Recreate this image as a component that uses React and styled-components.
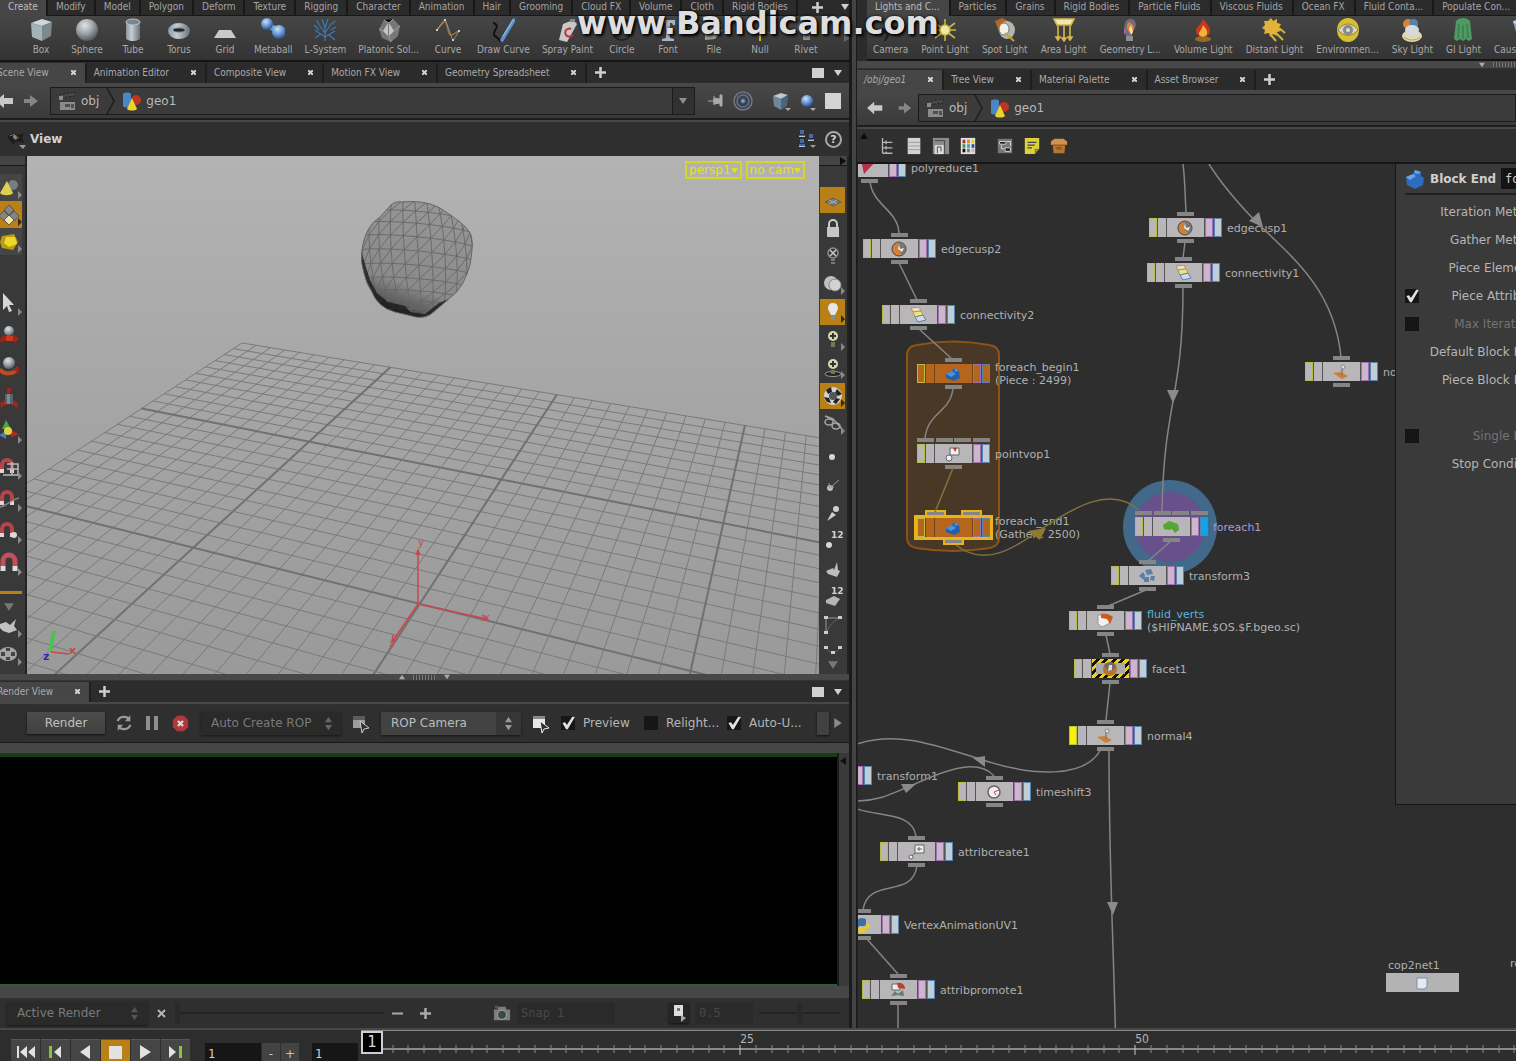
import React from 'react';
import styled, { createGlobalStyle, css } from 'styled-components';

const GlobalStyle = createGlobalStyle`
  * {
    box-sizing: border-box;
  }
  body {
    margin: 0;
    background: #2b2b2b;
    color: #bdbdbd;
    font-family: 'DejaVu Sans', sans-serif;
    font-size: 12px;
    overflow: hidden;
  }
  button,
  input,
  select {
    font: inherit;
    color: inherit;
    margin: 0;
    padding: 0;
    border: 0;
    border-radius: 0;
    background: none;
  }
  svg {
    display: block;
    flex: none;
  }
`;

/* ---------- shelf drawings, all on a 24 x 24 box ---------- */

const shelfIcons = {
  box: (
    <g>
      <path d="M2 5l11-4 10 3-10 4z" fill="#cdd6d9" />
      <path d="M2 5l11 3v15L3 19z" fill="#a5b3b8" />
      <path d="M13 8l10-4-1 14-9 5z" fill="#7b898f" />
    </g>
  ),
  sphere: <circle cx="12" cy="12" r="11" fill="url(#ball)" />,
  tube: (
    <g>
      <path d="M5 4v16c0 4 14 4 14 0V4z" fill="url(#steel)" />
      <ellipse cx="12" cy="4" rx="7" ry="3" fill="#7b8790" stroke="#bcc5cb" />
    </g>
  ),
  torus: (
    <g>
      <ellipse cx="12" cy="13" rx="11" ry="8" fill="url(#steel)" />
      <ellipse cx="12" cy="12" rx="6" ry="2" fill="#22262c" stroke="#6d7a88" />
    </g>
  ),
  grid: <path d="M6 12h12l5 8H1z" fill="#c9c9c9" />,
  metaball: (
    <g>
      <path d="M7 7l12 7" stroke="#6f9ed8" strokeWidth="6" />
      <circle cx="6" cy="6" r="6" fill="url(#blue)" />
      <circle cx="18" cy="14" r="7" fill="url(#blue)" />
    </g>
  ),
  lsystem: (
    <g stroke="#3c78b8" strokeWidth="1.2" fill="none">
      <path d="M12 23V10M12 15L6 7M12 15l6-9M12 10L9 1M12 10l3-9M12 19L2 12M12 19l10-6M6 12L1 7M6 7L4 2M18 6l5-3M18 12l5-3M8 16l-6 4M16 17l6 5" />
    </g>
  ),
  platonic: (
    <g>
      <path d="M7 2l9-1 7 7-2 10-7 6-9-4-3-9z" fill="#777" />
      <path d="M12 5l5 8-5 5zM11 5l-5 8 5 5z" fill="#c9c4c0" />
      <path d="M7 2l5 3 4-4M2 11l4 2M23 8l-6 5M12 18l2 6" stroke="#a09c98" />
    </g>
  ),
  curve: (
    <g fill="none">
      <path d="M1 12C10 0 10 3 12 12s4 4 11 1" stroke="#9c6b35" strokeWidth="1.5" />
      <path d="M1 12L9 1l8 22 6-10" stroke="#aaa" strokeWidth=".7" />
      <path d="M0 11h2v2H0zM8 1h2v2H8zM16 21h2v2h-2zM22 12h2v2h-2z" fill="#ccc" />
    </g>
  ),
  drawcurve: (
    <g fill="none" strokeLinecap="round">
      <path d="M3 5c8 4-4 9 1 13 3 3 4 2 5 5" stroke="#111" strokeWidth="2" />
      <path d="M23 2L11 22" stroke="#5b93d0" strokeWidth="3.5" />
      <path d="M22 2L12 18" stroke="#9cc4ee" strokeWidth="1" />
    </g>
  ),
  spray: (
    <g>
      <path d="M8 6l10-4 4 4-10 18-8-2z" fill="#c9c9c9" />
      <path d="M16 11a4 4 0 1 0 2 5" fill="none" stroke="#b33" strokeWidth="2" />
      <path d="M15 1h5v3h-5z" fill="#888" />
    </g>
  ),
  circle: <circle cx="12" cy="12" r="10" fill="none" stroke="#1f1f1f" strokeWidth="1.5" />,
  font: <path d="M5 2h14v5h-2l-1-2h-2v15l4 1v2H6v-2l4-1V5H8L7 7H5z" fill="#a9b4c2" />,
  file: (
    <g>
      <path d="M3 8h8l10 4-8 9-10 1z" fill="#9a9a9a" />
      <path d="M12 4l8 2-2 9-6-3z" fill="#d07a2b" />
    </g>
  ),
  nullobj: (
    <g strokeWidth="2">
      <path d="M12 2v21" stroke="#c9b71c" />
      <path d="M3 14h8" stroke="#3a70b0" />
      <path d="M13 12l9 3" stroke="#b03a2a" />
    </g>
  ),
  rivet: (
    <g>
      <ellipse cx="12" cy="9" rx="9" ry="7" fill="#666" />
      <path d="M9 15h7v7H9z" fill="#8d8d8d" />
    </g>
  ),
  camera: (
    <g fill="#1c1c1c">
      <path d="M6 8h12v8H6zM3 10h3v5H3zM8 16l-3 7h2l4-7z" />
      <circle cx="9" cy="5" r="3" />
    </g>
  ),
  point: (
    <g stroke="#c9b640" strokeWidth="1.6">
      <path d="M12 1v22M2 5l20 15M22 5L2 20M1 12h22" />
      <circle cx="12" cy="12" r="5" fill="#eee9a8" />
    </g>
  ),
  spot: (
    <g>
      <path d="M2 3l7-3 6 3-3 8-6 3z" fill="#b5651f" />
      <ellipse cx="14" cy="12" rx="8" ry="9" fill="#b5b5ae" />
      <ellipse cx="11" cy="11" rx="5" ry="6" fill="#f1f1ea" stroke="#777" />
      <path d="M12 15l9 8" stroke="#c4a52a" strokeWidth="2" />
    </g>
  ),
  area: (
    <g stroke="#d8b948" strokeWidth="1.6" fill="#d8b948">
      <path d="M2 1h20l-3 6H5z" fill="#efe6b6" />
      <path d="M6 8v13M12 8v14M18 8v13" />
      <path d="M4 19h4l-2 3zM10 20h4l-2 3zM16 19h4l-2 3z" />
    </g>
  ),
  geolight: (
    <g>
      <path d="M8 3c7-6 12 2 9 7s-3 7-4 13H9c0-6-5-12-1-20z" fill="#716a80" />
      <path d="M11 4c6 2 6 8 2 12-4-3-6-8-2-12z" fill="#d8833c" />
      <path d="M11 11l2-4 2 7-2 3z" fill="#efe58c" />
      <path d="M6 9l2 5-2 3z" fill="#b06ab0" />
      <path d="M8 18h7v5H8z" fill="#8e8e94" />
    </g>
  ),
  volume: (
    <g>
      <ellipse cx="12" cy="21" rx="8" ry="3" fill="#9a6a24" />
      <path d="M12 0c2 5 8 8 7 14s-13 6-14 0C4 9 11 7 12 0z" fill="#c8381c" />
      <path d="M12 7c2 3 5 5 4 9s-8 3-8 0 3-4 4-9z" fill="#f3b33a" />
    </g>
  ),
  distant: (
    <g>
      <path d="M9 0l2 3 4-2v4l4 1-2 4 2 3-4 1v4l-4-2-3 3-1-4-5 1 1-4-3-2 3-3-1-4 4 0z" fill="#e2b23a" />
      <path d="M13 14l8 8M17 10l6 5M9 17l5 6" stroke="#d8b13c" strokeWidth="2" />
    </g>
  ),
  environment: (
    <g>
      <ellipse cx="12" cy="12" rx="11" ry="12" fill="#d9c031" />
      <path d="M2 12c5-8 15-8 20 0-5 7-15 7-20 0z" fill="#d2d2cc" stroke="#8d8023" />
      <circle cx="12" cy="12" r="5" fill="#888" />
      <circle cx="12" cy="12" r="2" fill="#ddd" />
    </g>
  ),
  sky: (
    <g>
      <circle cx="8" cy="6" r="5" fill="#d88434" />
      <path d="M9 3c5-5 10-1 9 5l-6 6z" fill="#5a7fa6" />
      <ellipse cx="12" cy="18" rx="10" ry="6" fill="#ddd9b8" />
      <ellipse cx="12" cy="12" rx="7" ry="5" fill="#d4dae0" />
      <path d="M4 19c5 4 12 4 16 0" stroke="#c89b3a" fill="none" />
    </g>
  ),
  gi: (
    <g>
      <path d="M5 3c3-4 11-4 14 0l2 18-3 2-3-2-3 2-3-2-3 2-3-2z" fill="#4f9a63" />
      <path d="M8 6l-1 14M12 7v14M16 6l1 14" stroke="#3c7d50" strokeWidth="1.5" />
    </g>
  ),
  caustic: (
    <g>
      <path d="M2 3h20l-4 12-6 3-7-4z" fill="#7ba3d8" />
      <ellipse cx="12" cy="4" rx="10" ry="3" fill="#b9d0ee" />
    </g>
  ),
};

/* ---------- interface drawings, 20 x 20 box ---------- */

const magnet = (
  <g fill="none" strokeWidth="4">
    <path d="M3 14V9a5 5 0 0 1 10 0v5" stroke="#b8434c" />
    <path d="M3 13v4M13 13v4" stroke="#d9d9d9" />
  </g>
);

const uiIcons = {
  back: <path d="M0 10l8-7v4h9v6H8v4z" fill="#c8c8c8" />,
  forward: <path d="M18 10l-8-6v4H4v4h6v4z" fill="#858585" />,
  obj: (
    <g>
      <path d="M2 4l16-3v4L2 7z" fill="#484848" stroke="#222" strokeDasharray="2 2" />
      <path d="M2 5h4v4H2zM3 11h15v8H3z" fill="#8b8b8b" />
      <path d="M8 13h5v3H8zM14 13h3v4h-3z" fill="#505050" />
    </g>
  ),
  geo: (
    <g>
      <path d="M1 3c0-2 8-2 8 0v12c0 2-8 2-8 0z" fill="#4c86c6" />
      <circle cx="14" cy="9" r="5" fill="#bd3524" />
      <path d="M10 7l5 11c-2 2-8 2-10 0z" fill="#ecd42c" />
    </g>
  ),
  pin: <path d="M1 10h6M7 5v9M7 7l6 1V4h2v11h-2v-3l-6 1z" stroke="#aaa" fill="#aaa" />,
  target: (
    <g fill="none" stroke="#5575a0">
      <circle cx="10" cy="10" r="9" stroke="#71767f" strokeWidth="1.5" />
      <circle cx="10" cy="10" r="6" strokeWidth="1.5" />
      <circle cx="10" cy="10" r="2" fill="#7ea3d4" />
    </g>
  ),
  cube: (
    <g>
      <path d="M2 5l8-3 7 2-7 4z" fill="#b9c8d4" />
      <path d="M2 5l8 3v11l-7-4z" fill="#6f8799" />
      <path d="M10 8l7-4-1 11-6 4z" fill="#4d6578" />
      <path d="M14 17h6l-3 3z" fill="#aaa" />
    </g>
  ),
  ball: (
    <g>
      <circle cx="10" cy="10" r="6" fill="url(#blue)" />
      <path d="M13 17h6l-3 3z" fill="#aaa" />
    </g>
  ),
  square: <path d="M2 2h16v16H2z" fill="#d4d4d4" />,
  people: (
    <g fill="#426aa5">
      <path d="M3 1h4v4H3zM2 6h6v2H2zM12 5h4v4h-4zM11 10h6v2h-6zM3 10h4v4H3zM2 15h6v3H2z" />
      <path d="M2 7h6v1H2zM11 11h6v1h-6zM2 17h6v1H2z" fill="#b5c4da" />
      <path d="M13 16h6l-3 3z" fill="#999" />
    </g>
  ),
  eye: (
    <g>
      <path d="M1 8l6-4 6 2 5-2-2 5 2 5-7-2-4 3z" fill="#1c1c1c" />
      <path d="M4 7l5-2M9 11l4-3" stroke="#777" />
      <circle cx="9" cy="8" r="2" fill="#888" />
      <path d="M13 16h7l-3 4z" fill="#999" />
    </g>
  ),
  cone: (
    <g>
      <circle cx="14" cy="7" r="5" fill="#777d84" />
      <path d="M8 3l6 12c-2 3-11 3-13 0z" fill="#e0d050" />
    </g>
  ),
  diamonds: (
    <g stroke="#555" fill="#858585">
      <path d="M10 0l5 5-5 5-5-5zM5 6l5 5-5 5-5-5zM15 6l5 5-5 5-5-5z" />
      <path d="M10 10l5 5-5 5-5-5z" fill="#f0e4a0" />
    </g>
  ),
  yellowcube: (
    <g>
      <path d="M3 4l12-2 4 8-5 8-11-2-2-6z" fill="#b89d10" />
      <path d="M7 5l9 0 2 7-8 3-5-4z" fill="#ecd82c" />
    </g>
  ),
  arrow: <path d="M4 1l11 12-5 0 3 6-3 1-2-6-4 4z" fill="#d6d6d6" />,
  move: (
    <g>
      <path d="M0 16l4-4 12-1 4 4-4 4-3-3H6l-3 3z" fill="#a0221c" />
      <path d="M7 12h7v5H7z" fill="#c83a22" />
      <circle cx="10" cy="7" r="5" fill="url(#ball)" />
    </g>
  ),
  rotate: (
    <g>
      <path d="M1 13c3 6 14 6 18-1" fill="none" stroke="#c04a22" strokeWidth="4" />
      <path d="M14 14l6-4 0 7z" fill="#a0221c" />
      <circle cx="10" cy="7" r="6" fill="url(#ball)" />
    </g>
  ),
  scale: (
    <g>
      <path d="M8 0h4v5H8zM1 15l5-3 2 4-6 4zM19 15l-5-3-2 4 6 4z" fill="#9c2620" />
      <path d="M6 6h8v10H6z" fill="#59636b" />
      <path d="M8 6h3v10H8z" fill="#7f8990" />
    </g>
  ),
  handle: (
    <g>
      <path d="M7 0l5 9H3z" fill="#4ba63a" />
      <path d="M0 15l7-4 0 8z" fill="#467fc0" />
      <path d="M20 14l-8-4v7z" fill="#b9281e" />
      <circle cx="9" cy="11" r="4" fill="#e0d044" />
    </g>
  ),
  snapgrid: (
    <g>
      {magnet}
      <path d="M8 8h11v11H4M13 6v13M8 13h11" fill="none" stroke="#bbb" strokeWidth="1.5" />
    </g>
  ),
  snapcurve: (
    <g>
      {magnet}
      <path d="M0 19c8 0 8-6 20-9" fill="none" stroke="#888" strokeWidth="1.5" />
    </g>
  ),
  snappoint: (
    <g>
      {magnet}
      <circle cx="15" cy="15" r="3" fill="#d9d9d9" />
    </g>
  ),
  magnet: (
    <g fill="none" strokeWidth="5">
      <path d="M4 14V9a6 6 0 0 1 12 0v5" stroke="#c0505a" />
      <path d="M4 14v5M16 14v5" stroke="#dedede" />
    </g>
  ),
  bird: <path d="M1 8l6-2 4 3 6-6-2 7 3 4-8 3-6-2-3-3z" fill="#c2c2c2" />,
  reel: (
    <g>
      <ellipse cx="9" cy="10" rx="9" ry="7" fill="#a5a5a5" />
      <path d="M7 4h4v3H7zM2 8h4v4H2zM12 8h4v4h-4zM7 13h4v3H7z" fill="#444" />
    </g>
  ),
  plane: (
    <g>
      <path d="M2 12l8-4 8 4-8 4z" fill="#7c7c7c" stroke="#5a5a5a" />
      <path d="M6 10l8 4M14 10l-8 4" stroke="#aaa" />
    </g>
  ),
  lock: (
    <g>
      <path d="M6 9V6a4 4 0 0 1 8 0v3" fill="none" stroke="#ccc" strokeWidth="2" />
      <path d="M4 9h12v10H4z" fill="#c5c5c5" />
    </g>
  ),
  bulboff: (
    <g fill="none" stroke="#8d8d8d" strokeWidth="1.5">
      <circle cx="10" cy="7" r="5" />
      <path d="M7 4l6 6M13 4l-6 6" stroke="#c8c8c8" />
      <path d="M8 14h4M8 17h4" />
    </g>
  ),
  balls: (
    <g>
      <circle cx="8" cy="9" r="7" fill="#c0c0c0" />
      <circle cx="12" cy="11" r="6" fill="#d2d2d2" stroke="#888" />
    </g>
  ),
  bulb: (
    <g>
      <path d="M10 1c5 0 6 5 4 8l-2 4H8L6 9C4 6 5 1 10 1z" fill="#e6e6e6" />
      <path d="M8 14h4v4H8z" fill="#8c8c8c" />
    </g>
  ),
  bulbplus: (
    <g>
      <circle cx="10" cy="6" r="5" fill="#d4d8b0" />
      <path d="M10 3v6M7 6h6" stroke="#333" strokeWidth="2" />
      <path d="M8 12h4v5H8z" fill="#77755a" />
    </g>
  ),
  bulbring: (
    <g>
      <ellipse cx="10" cy="16" rx="8" ry="2.500" fill="#222" stroke="#999" />
      <circle cx="10" cy="6" r="5" fill="#d4d8b0" />
      <path d="M10 3v6M7 6h6" stroke="#333" strokeWidth="2" />
      <path d="M8 12h4v4H8z" fill="#77755a" />
    </g>
  ),
  checker: (
    <g>
      <circle cx="10" cy="10" r="9" fill="#d2d2d2" />
      <path d="M3 4l5-3 1 5-4 2zM14 3l5 5-4 2-3-3zM17 13l-4 5-3-2 3-4zM1 11l5 1 2 5-4-1z" fill="#222" />
      <circle cx="10" cy="10" r="4" fill="#555" />
    </g>
  ),
  glasses: (
    <g fill="none" stroke="#a5a5a5" strokeWidth="1.5">
      <path d="M2 2l8 3 9 10" />
      <ellipse cx="6" cy="8" rx="4" ry="3" />
      <ellipse cx="13" cy="12" rx="4" ry="3" />
    </g>
  ),
  dot: <circle cx="9" cy="10" r="3" fill="#d8d8d8" />,
  normal: (
    <g>
      <circle cx="7" cy="13" r="3" fill="#bbb" />
      <path d="M6 8v4h5M8 12l8-7" stroke="#999" fill="none" />
    </g>
  ),
  pen: (
    <g fill="#cfcfcf">
      <path d="M4 18l5-9 4 3z" />
      <circle cx="13" cy="6" r="3" />
    </g>
  ),
  dotnum: <circle cx="6" cy="14" r="3" fill="#d8d8d8" />,
  prim: <path d="M3 12l7-3 1 2 3-8 1 8 2 1-3 6-9-3z" fill="#bdbdbd" />,
  primnum: <path d="M3 13l8-4 6 3-5 7-9-3z" fill="#b5b5b5" />,
  corner: (
    <g stroke="#999" fill="none">
      <path d="M3 18V3h15" />
      <path d="M4 17Q6 9 15 4" stroke="#666" />
      <path d="M1 1h4v3H1zM15 1h4v3h-4zM1 16h4v3H1z" fill="#ccc" stroke="none" />
    </g>
  ),
  hull: (
    <g>
      <path d="M3 8c4 6 10 6 14 0" fill="none" stroke="#666" />
      <path d="M1 6h4v3H1zM15 6h4v3h-4zM8 11h4v3H8z" fill="#ccc" />
    </g>
  ),
  tree: (
    <g stroke="#b5b5b5" fill="none" strokeWidth="1.5">
      <path d="M5 1v17M5 6h11M5 12h11M5 18h11M9 4v4M9 10v4M9 16v3" />
    </g>
  ),
  list: (
    <g>
      <path d="M3 1h14v18H3z" fill="#d3d3d3" />
      <path d="M3 6h14M3 10h14M3 14h14" stroke="#999" />
    </g>
  ),
  pages: (
    <g>
      <path d="M1 1h18v18H1z" fill="#8b8b8b" />
      <path d="M3 9h10v10H3z" fill="#ddd" />
      <path d="M6 18v-7h4v5M3 4h11v15" fill="none" stroke="#444" />
    </g>
  ),
  palette: (
    <g>
      <path d="M2 1h16v18H2z" fill="#e2e2e2" />
      <path d="M4 3h3v4H4z" fill="#b52c1c" />
      <path d="M9 3h3v4H9z" fill="#d98a1e" />
      <path d="M14 3h3v4h-3z" fill="#e6d51f" />
      <path d="M4 8h3v4H4z" fill="#3d9a3b" />
      <path d="M9 8h3v4H9z" fill="#36a0c0" />
      <path d="M14 8h3v4h-3z" fill="#2b4aa8" />
      <path d="M4 13h3v4H4z" fill="#111" />
      <path d="M9 13h3v4H9z" fill="#777" />
      <path d="M14 13h3v4h-3z" fill="#bbb" />
    </g>
  ),
  network: (
    <g>
      <path d="M2 2h16v16H2z" fill="#777" />
      <path d="M4 5h7v3H4zM10 12h6v4h-6z" fill="#222" stroke="#ddd" />
      <path d="M6 9v4h3M12 5h4v5" fill="none" stroke="#ddd" />
    </g>
  ),
  note: (
    <g>
      <path d="M2 1h16v12l-5 6H2z" fill="#ddd23c" />
      <path d="M5 6h10M5 9h8M5 12h5" stroke="#444" strokeWidth="1.5" />
      <path d="M18 13l-5 6v-6z" fill="#8f871c" />
    </g>
  ),
  basket: (
    <g>
      <path d="M3 9h14l-1 9H4z" fill="#b8752f" />
      <path d="M1 5l4-3h10l4 3v4H1z" fill="#d1924a" />
      <path d="M2 9h16" stroke="#7a4a1a" />
      <path d="M7 11h6v3H7z" fill="#8f5a22" />
    </g>
  ),
  refresh: (
    <g fill="none" stroke="#9a9a9a" strokeWidth="2.5">
      <path d="M3 8c2-6 10-6 13-2M17 12c-2 6-10 6-13 2" />
      <path d="M17 1v7h-6zM3 19v-7h6z" fill="#9a9a9a" stroke="none" />
    </g>
  ),
  pause: <path d="M4 3h4v14H4zM12 3h4v14h-4z" fill="#8f8f8f" />,
  stop: (
    <g>
      <path d="M6 1h8l5 5v8l-5 5H6l-5-5V6z" fill="#b0383c" />
      <path d="M7 7l6 6M13 7l-6 6" stroke="#ddd" strokeWidth="2.5" />
    </g>
  ),
  pick: (
    <g>
      <path d="M3 3h12v12H3z" fill="#9c9c9c" />
      <path d="M3 3h12v4H3z" fill="#5c5c5c" />
      <path d="M10 8l9 7-5 1-2 4z" fill="#2e2e2e" stroke="#ccc" />
    </g>
  ),
  picklit: (
    <g>
      <path d="M3 3h12v12H3z" fill="#e8e8e8" />
      <path d="M3 3h12v3H3z" fill="#888" />
      <path d="M10 8l9 7-5 1-2 4z" fill="#2e2e2e" stroke="#eee" />
    </g>
  ),
  snapshot: (
    <g>
      <path d="M1 6h4l1-3h8l1 3h4v12H1z" fill="#7d7d7d" />
      <circle cx="10" cy="12" r="5" fill="#3a4a44" stroke="#aaa" />
      <path d="M2 2h4v3H2z" fill="#704a4a" />
    </g>
  ),
  notepin: (
    <g>
      <path d="M5 2h9v11H5z" fill="#dedede" />
      <path d="M8 5h3v3H8z" fill="#777" />
      <path d="M12 12l5 3-5 4z" fill="#aaa" />
    </g>
  ),
  blocks: (
    <g>
      <path d="M1 8l7-3 2-4 6 2v4l3 2-1 7-8 4-8-4z" fill="#2e6cc0" />
      <path d="M1 8l7-3 3 2-6 4zM10 1l6 2-3 2-4-1z" fill="#6ba4e6" />
    </g>
  ),
};

/* ---------- node drawings, 18 x 16 box ---------- */

const nodeIcons = {
  red: <path d="M1 0h16L4 14z" fill="#b5304c" />,
  cusp: (
    <g>
      <circle cx="9" cy="8" r="7" fill="#d0813a" stroke="#444" />
      <path d="M9 1a7 7 0 0 1 3 13L8 8z" fill="#777" />
      <path d="M9 3l1 5 4-1-2 4-4-3z" fill="#f1e9da" />
    </g>
  ),
  conn: (
    <g>
      <path d="M2 1l8-1 2 4-8 1z" fill="#e9dfd0" stroke="#c08c4a" />
      <path d="M4 5l8-1 2 4-8 2z" fill="#efe67a" stroke="#a8a04a" />
      <path d="M6 10l8-2 3 5-8 2z" fill="#d5d9e0" stroke="#5a82b5" />
    </g>
  ),
  cube: (
    <g>
      <path d="M2 8l6-3 2-3 5 3 1 7-6 3-8-3z" fill="#235fae" />
      <path d="M2 8l6-3 4 3-5 3zM10 2l5 3-4 1z" fill="#4f90da" />
    </g>
  ),
  vop: (
    <g stroke="#666" fill="#f0f0f0">
      <path d="M6 2h9v7H6z" />
      <circle cx="5" cy="12" r="3" />
      <path d="M9 2l2 4 2-4z" fill="#c0392b" stroke="none" />
    </g>
  ),
  green: <path d="M1 6l6-4 9 3 1 6-4 3-3-4-3 1-5-1z" fill="#57a536" />,
  xform: (
    <g fill="#5e7ea6">
      <path d="M1 8l4-4 2 3-1 5zM7 2l6-1 2 5-6 1zM13 8l4 0-1 5-4-1zM6 9h5v5H6z" />
    </g>
  ),
  file: (
    <g>
      <path d="M2 2l9 0 3 8-8 4-4-3z" fill="#f1f1f1" stroke="#999" />
      <path d="M5 1c6-1 9 1 12 3l-3 7-3-5-6-1z" fill="#c95a20" />
    </g>
  ),
  facet: (
    <g>
      <circle cx="9" cy="8" r="7" fill="#b9752c" />
      <path d="M3 5a7 7 0 0 1 12 0l-3 4-5 1z" fill="#6a6a6a" />
      <path d="M8 4l3 0 0 5-4 1z" fill="#ddd" />
    </g>
  ),
  normal: (
    <g>
      <path d="M1 9l7-1 8 4-6 3z" fill="#cf7d31" />
      <path d="M10 11V5l3-3" fill="none" stroke="#666" />
      <circle cx="11" cy="3" r="2" fill="#ddd" stroke="#888" />
    </g>
  ),
  clock: (
    <g>
      <circle cx="9" cy="8" r="6" fill="#f3eeee" stroke="#666" strokeWidth="1.5" />
      <path d="M9 8l5-2M9 8l2 3" stroke="#b24a5a" />
    </g>
  ),
  create: (
    <g stroke="#666" fill="#eee">
      <path d="M8 1h9v8H8zM12 3v4M10 5h5" />
      <circle cx="4" cy="13" r="2" />
      <path d="M5 12l3-3" />
    </g>
  ),
  python: (
    <g>
      <path d="M5 5V3q0-2 4-2t4 2v4q0 2-2 2H7q-2 0-2 3H4q-3-1-3-4t3-3z" fill="#3d6fa5" />
      <path d="M13 6h1q3 0 3 3t-3 3h-4v1h3q0 3-4 3t-4-3q0-3 2-3h4q2 0 2-2z" fill="#e6c936" />
    </g>
  ),
  promote: (
    <g>
      <path d="M3 2h8v6H3z" fill="#eee" stroke="#666" />
      <path d="M8 1c6-1 8 3 8 6l-7-1z" fill="#b9442e" />
      <path d="M2 14l4-5 3 3 5-4 1 6-6-1z" fill="#657b77" />
    </g>
  ),
  cop: <path d="M4 3h10v9l-3 2H4z" fill="#e6e9ee" stroke="#7b8fae" />,
};

const Svg = ({ set = uiIcons, name, size = 20, w, h, box = '0 0 20 20' }) => (
  <svg width={w || size} height={h || size} viewBox={box} aria-hidden="true">
    {set[name]}
  </svg>
);

const Triangle = ({ dir = 'down', size = 8, color = '#aaa' }) => {
  const d = {
    down: 'M0 1h8L4 7z',
    up: 'M0 7h8L4 1z',
    right: 'M1 0v8l6-4z',
    left: 'M7 0v8L1 4z',
  }[dir];
  return (
    <svg width={size} height={size} viewBox="0 0 8 8" aria-hidden="true">
      <path d={d} fill={color} />
    </svg>
  );
};

const Plus = ({ color = '#cfcfcf' }) => (
  <svg width="11" height="11" viewBox="0 0 11 11" aria-hidden="true">
    <path d="M5.500 0v11M0 5.500h11" stroke={color} strokeWidth="2.500" />
  </svg>
);

/* ---------- shelves ---------- */

const leftShelf = {
  tabs: ['Create', 'Modify', 'Model', 'Polygon', 'Deform', 'Texture', 'Rigging', 'Character', 'Animation', 'Hair', 'Grooming', 'Cloud FX', 'Volume', 'Cloth', 'Rigid Bodies'],
  tools: [
    ['Box', 'box'],
    ['Sphere', 'sphere'],
    ['Tube', 'tube'],
    ['Torus', 'torus'],
    ['Grid', 'grid'],
    ['Metaball', 'metaball'],
    ['L-System', 'lsystem'],
    ['Platonic Sol...', 'platonic'],
    ['Curve', 'curve'],
    ['Draw Curve', 'drawcurve'],
    ['Spray Paint', 'spray'],
    ['Circle', 'circle'],
    ['Font', 'font'],
    ['File', 'file'],
    ['Null', 'nullobj'],
    ['Rivet', 'rivet'],
  ],
};

const rightShelf = {
  tabs: ['Lights and C...', 'Particles', 'Grains', 'Rigid Bodies', 'Particle Fluids', 'Viscous Fluids', 'Ocean FX', 'Fluid Conta...', 'Populate Con...'],
  tools: [
    ['Camera', 'camera'],
    ['Point Light', 'point'],
    ['Spot Light', 'spot'],
    ['Area Light', 'area'],
    ['Geometry L...', 'geolight'],
    ['Volume Light', 'volume'],
    ['Distant Light', 'distant'],
    ['Environmen...', 'environment'],
    ['Sky Light', 'sky'],
    ['GI Light', 'gi'],
    ['Caustic Light', 'caustic'],
  ],
};

const Shelf = ({ tabs, tools, inset, more }) => (
  <ShelfBox $inset={inset}>
    <ShelfTabs>
      {tabs.map((tab, i) => (
        <ShelfTab key={tab} $active={i === 0} $roomy={inset}>
          {tab}
        </ShelfTab>
      ))}
      {more && (
        <ShelfMore>
          <Plus />
          <Triangle color="#d0d0d0" />
        </ShelfMore>
      )}
    </ShelfTabs>
    <ShelfTools $inset={inset}>
      {tools.map(([label, icon]) => (
        <Tool key={label} $roomy={inset}>
          <Svg set={shelfIcons} name={icon} size={24} box="0 0 24 24" />
          {label}
        </Tool>
      ))}
      {more && (
        <ShelfScroll aria-label="More tools">
          <Triangle dir="right" color="#666" />
        </ShelfScroll>
      )}
    </ShelfTools>
  </ShelfBox>
);

const PaneTabs = ({ tabs, bleed, menu }) => (
  <TabStrip>
    {tabs.map((tab, i) => (
      <PaneTab key={tab} $active={i === 0} $bleed={bleed && i === 0} $italic={tab[0] === '/'}>
        {tab}
        <TabClose aria-label={`Close ${tab}`}>
          <svg width="5" height="5" viewBox="0 0 5 5">
            <path d="M0 0l5 5M5 0L0 5" stroke="#d0d0d0" strokeWidth="2" />
          </svg>
        </TabClose>
      </PaneTab>
    ))}
    <AddTab aria-label="New tab">
      <Plus />
    </AddTab>
    {menu && (
      <PaneMenu>
        <svg width="12" height="10" aria-hidden="true">
          <path d="M0 0h12v10H0z" fill="#d0d0d0" />
        </svg>
        <Triangle color="#d0d0d0" />
      </PaneMenu>
    )}
  </TabStrip>
);

const PathField = () => (
  <PathBox>
    <Crumb>
      <Svg name="obj" />
      obj
    </Crumb>
    <svg width="9" height="26" aria-hidden="true">
      <path d="M1 0l7 13-7 13" fill="none" stroke="#1d1d1d" strokeWidth="1.500" />
    </svg>
    <Crumb>
      <Svg name="geo" />
      geo1
    </Crumb>
  </PathBox>
);

/* ---------- 3D viewport ---------- */

const VIEW = { x: 27, y: 156 };

// ground plane homography, one unit is ten grid cells
const project = (u, v) => {
  const w = 1 - 0.0544 * u - 0.1416 * v;
  return [
    ((242 + 127.1 * u - 120.5 * v) / w - VIEW.x).toFixed(1),
    ((343 + 4.36 * u + 7.69 * v) / w - VIEW.y).toFixed(1),
  ];
};

const gridLines = [];
for (let i = 0; i <= 40; i++) {
  const k = i / 10;
  const heavy = i % 10 === 0 && i > 0;
  gridLines.push({ id: `u${i}`, from: project(k, 0), to: project(k, 4), heavy });
  gridLines.push({ id: `v${i}`, from: project(0, k), to: project(4, k), heavy });
}

// triangulated mesh of the rock
const meshPath = () => {
  const n = 14;
  const at = (i, j) => {
    const a = (j / n - 0.5) * Math.PI;
    const b = (i / n - 0.5) * Math.PI;
    const px = 391 + 62 * Math.sin(a) * Math.cos(b * 0.6) + 4 * Math.sin(b);
    const py = 102 + 64 * Math.sin(b) - 7 * Math.cos(a) + 6 * Math.sin(a) * Math.cos(b);
    return `${px.toFixed(1)} ${py.toFixed(1)}`;
  };
  let d = '';
  for (let i = 0; i < n; i++) {
    for (let j = 0; j < n; j++) {
      d += `M${at(i, j)}L${at(i, j + 1)}L${at(i + 1, j)}L${at(i, j)}`;
    }
  }
  return d;
};

const ROCK =
  'M375 46Q385 45 393 46Q404 47 413 52Q424 59 433 66Q441 72 444 79Q446 86 445 94Q444 103 443 109Q440 119 436 127Q431 136 423 142L410 153Q403 160 397 161Q390 162 385 160L368 156Q358 153 353 148Q347 142 345 136Q339 127 337 117Q333 106 335 94Q336 83 341 74Q345 66 353 61L364 49Q368 45 375 46Z';

const Scene = () => (
  <SceneSvg aria-hidden="true">
    <defs>
      <clipPath id="rock">
        <path d={ROCK} />
      </clipPath>
      <linearGradient id="rockFill" x1=".65" y1=".1" x2=".35" y2="1">
        <stop offset="0" stopColor="#959595" />
        <stop offset=".7" stopColor="#8a8a8a" />
        <stop offset=".88" stopColor="#5c5c5c" />
        <stop offset="1" stopColor="#222" />
      </linearGradient>
    </defs>
    {gridLines.map(({ id, from, to, heavy }) => (
      <line
        key={id}
        x1={from[0]}
        y1={from[1]}
        x2={to[0]}
        y2={to[1]}
        stroke={heavy ? '#707070' : '#7a7a7a'}
        strokeWidth={heavy ? 2 : 1}
      />
    ))}
    <path d={ROCK} fill="url(#rockFill)" />
    <g clipPath="url(#rock)">
      <path d={meshPath()} fill="none" stroke="#686868" strokeWidth=".9" />
      <path d="M333 92L338 108 343 124 350 137 361 146 378 150 383 156 398 158 412 147 424 142 412 165H350L330 130Z" fill="#151515" opacity=".75" />
    </g>
    <path d={ROCK} fill="none" stroke="#666" />
    <g stroke="#c9484b" strokeWidth="1.5" fill="none">
      <path d="M391 448V394M389 399l2-5 2 5M391 448l69 15M455 459l5 4-6 1M391 448l-26 38M371 482l-6 4 1-7" />
    </g>
    <g fontSize="10" fill="#c9484b">
      <text x="391" y="390">y</text>
      <text x="457" y="465">x</text>
      <text x="362" y="491">z</text>
    </g>
    <path d="M23 496l4-21" stroke="#4ec24e" strokeWidth="4" />
    <path d="M24 496l18 2" stroke="#c9484b" strokeWidth="1.500" />
    <g fontSize="11" fontWeight="bold">
      <text x="42" y="498" fill="#c9484b">x</text>
      <text x="16" y="504" fill="#2a2ab0">z</text>
    </g>
  </SceneSvg>
);

const leftTools = [
  [['cone', 1], ['diamonds', 1, 'on'], ['yellowcube', 1]],
  [['arrow', 1], ['move'], ['rotate'], ['scale'], ['handle', 1]],
  [['snapgrid', 1], ['snapcurve', 1], ['snappoint', 1], ['magnet', 1]],
];

const rightTools = [
  [['plane', 0, 'on'], ['lock'], ['bulboff'], ['balls', 1], ['bulb', 1, 'on'], ['bulbplus', 1], ['bulbring', 1], ['checker', 1, 'on'], ['glasses', 1]],
  [['dot'], ['normal'], ['pen'], ['dotnum', 0, '', '12'], ['prim'], ['primnum', 0, '', '12'], ['corner']],
];

/* ---------- network editor ---------- */

// scroll position of the network view
const PAN = { x: 858, y: 164 };

const nodes = [
  { name: 'polyreduce1', x: 833, y: 158, icon: 'red' },
  { name: 'edgecusp2', x: 863, y: 239, icon: 'cusp' },
  { name: 'connectivity2', x: 882, y: 305, icon: 'conn' },
  { name: 'foreach_begin1', note: '(Piece : 2499)', x: 917, y: 364, icon: 'cube', tone: 'orange' },
  { name: 'pointvop1', x: 917, y: 444, icon: 'vop', inputs: 4 },
  { name: 'foreach_end1', note: '(Gather : 2500)', x: 917, y: 518, icon: 'cube', tone: 'orange', inputs: 2, selected: true },
  { name: 'foreach1', x: 1135, y: 517, icon: 'green', inputs: 4, display: true, color: '#a99bdc' },
  { name: 'edgecusp1', x: 1149, y: 218, icon: 'cusp' },
  { name: 'connectivity1', x: 1147, y: 263, icon: 'conn' },
  { name: 'normal5', x: 1305, y: 362, icon: 'normal' },
  { name: 'transform3', x: 1111, y: 566, icon: 'xform' },
  { name: 'fluid_verts', note: '($HIPNAME.$OS.$F.bgeo.sc)', x: 1069, y: 611, icon: 'file', color: '#5ab4dc' },
  { name: 'facet1', x: 1074, y: 659, icon: 'facet', hazard: true },
  { name: 'normal4', x: 1069, y: 726, icon: 'normal', bypass: true },
  { name: 'transform1', x: 799, y: 766, icon: 'xform' },
  { name: 'timeshift3', x: 958, y: 782, icon: 'clock' },
  { name: 'attribcreate1', x: 880, y: 842, icon: 'create' },
  { name: 'VertexAnimationUV1', x: 826, y: 915, icon: 'python' },
  { name: 'attribpromote1', x: 862, y: 980, icon: 'promote' },
];

const wires = [
  'M870 181C872 205 898 210 899 233',
  'M899 263L917 300',
  'M918 328L952 359',
  'M953 388C951 412 928 412 925 438',
  'M1183 164C1185 180 1185 195 1186 212',
  'M1209 164C1225 190 1245 210 1257 223C1300 263 1335 295 1341 357',
  'M1185 242L1183 258',
  'M1183 287C1183 400 1164 400 1162 511',
  'M1171 541L1147 562',
  'M1146 590L1108 606',
  'M1106 635L1110 654',
  'M1110 683L1106 720',
  'M1109 749C1109 880 1114 940 1117 1100',
  'M1101 749C1085 780 1030 775 986 761C940 747 900 730 857 744',
  'M857 801C880 801 895 792 908 787C935 775 975 755 994 776',
  'M857 809C880 817 912 812 916 836',
  'M917 866C912 900 868 876 863 910',
  'M866 938L898 974',
  'M898 1004V1100',
];

const loopWires = [
  'M953 468L935 512',
  'M956 545C985 568 1015 548 1043 528C1073 508 1110 485 1139 510',
];

const arrows = [
  'M1167 390h12l-6 13z',
  'M1249 221l10-9 4 15z',
  'M1107 902h11l-5 13z',
  'M973 758l12-2v11z',
  'M901 784h15l-10 9z',
];

const Wires = () => (
  <WireSvg aria-hidden="true">
    <g transform={`translate(${-PAN.x} ${-PAN.y})`} fill="none" strokeWidth="1.500">
      {wires.map((d) => (
        <path key={d} d={d} stroke="#858585" />
      ))}
      {loopWires.map((d) => (
        <path key={d} d={d} stroke="#837339" />
      ))}
      {arrows.map((d) => (
        <path key={d} d={d} fill="#8b8b8b" />
      ))}
      <path d="M1028 531l18-3-6 12z" fill="#8f7b2f" />
    </g>
  </WireSvg>
);

const Backdrops = () => (
  <BackdropSvg aria-hidden="true">
    <g transform={`translate(${-PAN.x} ${-PAN.y})`}>
      <path
        d="M907 355Q907 346 917 345Q953 338 989 345Q999 346 999 355V538Q999 546 990 548Q953 554 916 548Q907 546 907 538Z"
        fill="#4a3826"
        stroke="#8c5418"
        strokeWidth="2"
      />
      <circle cx="1170" cy="527" r="47" fill="#42688a" />
      <circle cx="1170" cy="527" r="35" fill="#67508c" />
    </g>
  </BackdropSvg>
);

const Node = ({ node }) => (
  <NodeBox $x={node.x - PAN.x} $y={node.y - PAN.y}>
    <Ports $many={node.inputs > 1} $two={node.inputs === 2}>
      {Array.from({ length: node.inputs || 1 }, (_, i) => (
        <Port key={i} $selected={node.selected} />
      ))}
    </Ports>
    <NodeBody $tone={node.tone} $selected={node.selected}>
      <Flag $edge="#b9bd4a" $fill={node.bypass && '#f4f400'} />
      <Flag />
      <NodeFace $hazard={node.hazard}>
        <Svg set={nodeIcons} name={node.icon} w={18} h={16} box="0 0 18 16" />
      </NodeFace>
      <Flag $edge="#a070ac" $fill={node.tone ? '' : '#cdb5cd'} />
      <Flag $edge="#5683b0" $fill={node.display ? '#0fa5ea' : node.tone ? '' : '#bfcdd9'} />
    </NodeBody>
    <Ports>
      <Port $selected={node.selected} />
    </Ports>
    <NodeLabel $color={node.color}>
      {node.name}
      {node.note && <NodeNote>{node.note}</NodeNote>}
    </NodeLabel>
  </NodeBox>
);

const params = [
  { label: 'Iteration Method' },
  { label: 'Gather Method' },
  { label: 'Piece Elements' },
  { label: 'Piece Attribute', toggle: true, on: true },
  { label: 'Max Iterations', toggle: true },
  { label: 'Default Block Path' },
  { label: 'Piece Block Path' },
  { label: '' },
  { label: 'Single Pass', toggle: true },
  { label: 'Stop Condition' },
];

const ParamRow = ({ label, toggle, on }) => (
  <Param $dim={toggle && !on}>
    {toggle ? <Tick id={`param-${label}`} type="checkbox" defaultChecked={on} /> : <span />}
    <ParamLabel as={toggle ? 'label' : 'span'} htmlFor={toggle ? `param-${label}` : undefined}>
      {label}
    </ParamLabel>
  </Param>
);

/* ---------- time line ---------- */

const FRAME = 15.8;

const Timeline = () => (
  <TimelineBox>
    <svg width="100%" height="33" aria-hidden="true">
      <path d="M0 18h2000" stroke="#8a8a8a" strokeWidth="2" />
      {Array.from({ length: 90 }, (_, i) => (
        <path
          key={i}
          d={`M${Math.round(i * FRAME)} 14v${(i + 1) % 25 === 0 ? 10 : 8}`}
          stroke={(i + 1) % 25 === 0 ? '#c8c8c8' : '#8a8a8a'}
        />
      ))}
      <g fontSize="12" fill="#b5b5b5" fontFamily="'DejaVu Sans Condensed', 'DejaVu Sans', sans-serif">
        <text x={24 * FRAME} y="12">25</text>
        <text x={49 * FRAME} y="12">50</text>
      </g>
    </svg>
    <FrameMarker>1</FrameMarker>
  </TimelineBox>
);

const transport = [
  { label: 'First frame', d: 'M2 3h2v12H2zM12 3v12l-7-6zM20 3v12l-7-6z' },
  { label: 'Previous key', d: 'M16 3v12L9 9z', key: 'M4 3h3v12H4z' },
  { label: 'Play back', d: 'M15 2v14L5 9z' },
  { label: 'Stop', d: 'M4 3h13v13H4z', on: true },
  { label: 'Play', d: 'M5 2v14l11-7z' },
  { label: 'Next key', d: 'M4 3v12l7-6z', key: 'M14 3h3v12h-3z' },
];

const App = () => (
  <>
    <GlobalStyle />
    <Screen>
      <Gradients width="0" height="0" aria-hidden="true">
        <defs>
          <radialGradient id="ball" cx=".4" cy=".3" r=".7">
            <stop offset="0" stopColor="#dfe3e6" />
            <stop offset=".5" stopColor="#a2a8ad" />
            <stop offset="1" stopColor="#555a60" />
          </radialGradient>
          <radialGradient id="blue" cx=".4" cy=".3" r=".7">
            <stop offset="0" stopColor="#cfe0f5" />
            <stop offset=".5" stopColor="#6f9ed8" />
            <stop offset="1" stopColor="#28508c" />
          </radialGradient>
          <linearGradient id="steel">
            <stop offset="0" stopColor="#8b959c" />
            <stop offset=".4" stopColor="#c6ced4" />
            <stop offset="1" stopColor="#68727a" />
          </linearGradient>
        </defs>
      </Gradients>
      <Watermark>www.Bandicam.com</Watermark>
      <Workspace>
        <LeftColumn>
          <Shelf {...leftShelf} more />
          <PaneTabs
            bleed
            menu
            tabs={['Scene View', 'Animation Editor', 'Composite View', 'Motion FX View', 'Geometry Spreadsheet']}
          />
          <PathBar>
            <NavButton $cut aria-label="Back">
              <Svg name="back" />
            </NavButton>
            <NavButton $gap aria-label="Forward">
              <Svg name="forward" />
            </NavButton>
            <PathField />
            <PathDrop aria-label="Path history">
              <Triangle color="#8f8f8f" />
            </PathDrop>
            <PathIcons>
              <Svg name="pin" />
              <Svg name="target" />
              <Svg name="cube" />
              <Svg name="ball" />
              <Svg name="square" />
            </PathIcons>
          </PathBar>
          <ViewBar>
            <Svg name="eye" />
            <ViewTitle>View</ViewTitle>
            <Svg name="people" />
            <HelpButton aria-label="Help">?</HelpButton>
          </ViewBar>
          <ViewRow>
            <ToolColumn $side="left">
              <ColumnCap />
              {leftTools.map((group, i) => (
                <ToolGroup key={i} $framed={i === 0}>
                  {group.map(([icon, menu, on]) => (
                    <ToolButton key={icon} $on={on} $menu={menu} $tight={i === 0} aria-label={icon}>
                      <Svg name={icon} />
                    </ToolButton>
                  ))}
                </ToolGroup>
              ))}
              <Accent />
              <Triangle size={10} color="#777" />
              <ToolButton $menu aria-label="flipbook">
                <Svg name="bird" />
              </ToolButton>
              <ToolButton $menu aria-label="render">
                <Svg name="reel" />
              </ToolButton>
            </ToolColumn>
            <Viewport>
              <Scene />
              <CameraMenus>
                <CameraMenu>
                  persp1
                  <Triangle size={7} color="#e4e020" />
                </CameraMenu>
                <CameraMenu>
                  no cam
                  <Triangle size={7} color="#e4e020" />
                </CameraMenu>
              </CameraMenus>
            </Viewport>
            <ToolColumn $side="right">
              <ColumnCap>
                <Triangle dir="right" color="#0c0c0c" />
              </ColumnCap>
              {rightTools.map((group, i) => (
                <ToolGroup key={i}>
                  {group.map(([icon, menu, on, badge]) => (
                    <DisplayButton key={icon} $on={on} $menu={menu} aria-label={icon}>
                      <Svg name={icon} />
                      {badge && <ToolBadge>{badge}</ToolBadge>}
                    </DisplayButton>
                  ))}
                </ToolGroup>
              ))}
              <Svg name="hull" />
              <Triangle size={10} color="#777" />
            </ToolColumn>
          </ViewRow>
          <Splitter>
            <Triangle dir="up" size={6} />
            <Grip />
            <Triangle size={6} />
          </Splitter>
          <PaneTabs bleed menu tabs={['Render View']} />
          <RenderBar>
            <RenderButton>Render</RenderButton>
            <IconButton aria-label="Refresh">
              <Svg name="refresh" size={18} />
            </IconButton>
            <IconButton aria-label="Pause">
              <Svg name="pause" />
            </IconButton>
            <IconButton aria-label="Stop render">
              <Svg name="stop" size={17} />
            </IconButton>
            <SelectBox $dim>
              <select aria-label="Render node">
                <option>Auto Create ROP</option>
              </select>
              <Steps>
                <Triangle dir="up" size={7} color="#666" />
                <Triangle size={7} color="#666" />
              </Steps>
            </SelectBox>
            <IconButton aria-label="Pick node">
              <Svg name="pick" />
            </IconButton>
            <SelectBox>
              <select aria-label="Camera">
                <option>ROP Camera</option>
              </select>
              <Steps $split>
                <Triangle dir="up" size={7} color="#999" />
                <Triangle size={7} color="#999" />
              </Steps>
            </SelectBox>
            <IconButton aria-label="Pick camera">
              <Svg name="picklit" />
            </IconButton>
            <Checks>
              <CheckLabel>
                <Tick type="checkbox" defaultChecked />
                Preview
              </CheckLabel>
              <CheckLabel>
                <Tick type="checkbox" />
                Relight...
              </CheckLabel>
              <CheckLabel>
                <Tick type="checkbox" defaultChecked />
                Auto-U...
              </CheckLabel>
            </Checks>
            <Overflow aria-label="More options" />
            <Triangle dir="right" size={10} color="#8a8a8a" />
          </RenderBar>
          <RenderArea>
            <RenderCanvas />
            <RenderScroll>
              <Triangle dir="left" color="#111" />
            </RenderScroll>
          </RenderArea>
          <SnapBar>
            <SelectBox $dim>
              <select aria-label="Active render">
                <option>Active Render</option>
              </select>
              <Steps>
                <Triangle dir="up" size={7} color="#555" />
                <Triangle size={7} color="#555" />
              </Steps>
            </SelectBox>
            <IconButton aria-label="Remove snapshot">
              <svg width="9" height="9" viewBox="0 0 9 9">
                <path d="M1 1l7 7M8 1L1 8" stroke="#b5b5b5" strokeWidth="2" />
              </svg>
            </IconButton>
            <SnapSlider type="range" defaultValue="0" aria-label="Snapshot" />
            <IconButton aria-label="Previous">
              <svg width="11" height="11">
                <path d="M0 5.500h11" stroke="#aaa" strokeWidth="2" />
              </svg>
            </IconButton>
            <IconButton aria-label="Next">
              <Plus color="#aaa" />
            </IconButton>
            <SnapTools>
              <Svg name="snapshot" size={18} />
              <MonoInput $w={98} defaultValue="Snap 1" aria-label="Snapshot name" />
            </SnapTools>
            <SnapTools>
              <SnapPin aria-label="Compare">
                <Svg name="notepin" />
              </SnapPin>
              <MonoInput $w={58} defaultValue="0.5" aria-label="Blend" />
              <ShortSlider type="range" defaultValue="50" aria-label="Blend amount" />
            </SnapTools>
          </SnapBar>
        </LeftColumn>
        <Gutter />
        <RightColumn>
          <Shelf {...rightShelf} inset />
          <Splitter $end>
            <Triangle size={6} />
            <Grip />
          </Splitter>
          <PaneTabs tabs={['/obj/geo1', 'Tree View', 'Material Palette', 'Asset Browser']} />
          <PathBar $net>
            <NavButton aria-label="Back">
              <Svg name="back" size={18} />
            </NavButton>
            <NavButton aria-label="Forward">
              <Svg name="forward" size={18} />
            </NavButton>
            <PathField />
          </PathBar>
          <NetBar>
            <Triangle dir="up" color="#0c0c0c" />
            {['tree', 'list', 'pages', 'palette'].map((icon) => (
              <IconButton key={icon} aria-label={icon}>
                <Svg name={icon} size={18} />
              </IconButton>
            ))}
            <NetGap />
            {['network', 'note', 'basket'].map((icon) => (
              <IconButton key={icon} aria-label={icon}>
                <Svg name={icon} size={18} />
              </IconButton>
            ))}
          </NetBar>
          <Network>
            <Backdrops />
            {nodes.map((node) => (
              <Node key={node.name} node={node} />
            ))}
            <SubnetBox $x={1386 - PAN.x} $y={958 - PAN.y}>
              cop2net1
              <SubnetBody>
                <Svg set={nodeIcons} name="cop" w={18} h={16} box="0 0 18 16" />
              </SubnetBody>
            </SubnetBox>
            <SubnetBox $x={1508 - PAN.x} $y={956 - PAN.y}>
              ropnet1
            </SubnetBox>
            <Wires />
            <ParamPanel>
              <ParamHead>
                <Svg name="blocks" />
                Block End
                <ParamName defaultValue="foreach_end1" aria-label="Node name" />
              </ParamHead>
              {params.map((param) => (
                <ParamRow key={param.label} {...param} />
              ))}
            </ParamPanel>
          </Network>
        </RightColumn>
      </Workspace>
      <Playbar>
        <Transport>
          {transport.map(({ label, d, key, on }) => (
            <PlayButton key={label} $on={on} aria-label={label}>
              <svg width="22" height="18" viewBox="0 0 22 18">
                <path d={d} fill="#e2e2e2" />
                {key && <path d={key} fill="#86c440" />}
              </svg>
            </PlayButton>
          ))}
        </Transport>
        <FrameInputs>
          <FrameInput $w={56} defaultValue="1" aria-label="Current frame" />
          <StepButton aria-label="Decrease">-</StepButton>
          <StepButton aria-label="Increase">+</StepButton>
        </FrameInputs>
        <FrameInput $w={46} defaultValue="1" aria-label="Start frame" />
        <Timeline />
      </Playbar>
    </Screen>
  </>
);

const condensed = css`
  font-family: 'DejaVu Sans Condensed', 'DejaVu Sans', sans-serif;
  font-size: 10px;
`;

const menuCorner = css`
  &::after {
    content: '';
    position: absolute;
    right: 0;
    bottom: 2px;
    border: 4px solid transparent;
    border-left-color: ${(p) => (p.$on ? '#3a2a0c' : '#8a8a8a')};
    border-right-width: 0;
  }
`;

const Screen = styled.div`
  position: relative;
  display: flex;
  flex-direction: column;
  height: 100vh;
  overflow: hidden;
  white-space: nowrap;
`;

const Gradients = styled.svg`
  position: absolute;
`;

const Watermark = styled.div`
  position: absolute;
  top: 3px;
  left: 50%;
  transform: translateX(-50%);
  z-index: 10;
  font-size: 32px;
  font-weight: bold;
  line-height: 40px;
  color: #dedede;
  text-shadow: 2px 2px 3px #000, 0 0 3px #000;
`;

const Workspace = styled.main`
  display: flex;
  flex: 1;
  min-height: 0;
`;

const LeftColumn = styled.section`
  display: flex;
  flex-direction: column;
  flex: 0 0 56%;
  min-width: 0;
  overflow: hidden;
`;

const RightColumn = styled.section`
  display: flex;
  flex-direction: column;
  flex: 1;
  min-width: 0;
  overflow: hidden;
`;

const Gutter = styled.div`
  width: 8px;
  flex: none;
  background: #434343;
  border-left: 3px solid #1b1b1b;
  border-right: 1px solid #1b1b1b;
`;

const ShelfBox = styled.div`
  flex: none;
  height: ${(p) => (p.$inset ? '61px' : '62px')};
  margin-left: ${(p) => (p.$inset ? '10px' : '0')};
  border-bottom: 2px solid #141414;
  overflow: hidden;
  ${condensed}
`;

const ShelfTabs = styled.div`
  display: flex;
  height: 16px;
  background: #2a2a2a;
`;

const ShelfTab = styled.button`
  flex: none;
  height: 16px;
  line-height: 14px;
  padding: ${(p) => (p.$roomy ? '0 9px 2px 8px' : '0 8px 2px')};
  color: ${(p) => (p.$active ? '#bdbdbd' : '#a5a5a5')};
  background: ${(p) => (p.$active ? '#464646' : '#2b2b2b')};
  border-right: 2px solid #181818;
  border-bottom: ${(p) => (p.$active ? '0' : '1px solid #181818')};
`;

const ShelfMore = styled.span`
  display: flex;
  align-items: center;
  gap: 18px;
  height: 14px;
  padding-left: 14px;
`;

const ShelfTools = styled.div`
  display: flex;
  align-items: center;
  height: 44px;
  padding-left: ${(p) => (p.$inset ? '0' : '18px')};
  background: linear-gradient(#464646, #333);
`;

const Tool = styled.button`
  display: flex;
  flex-direction: column;
  align-items: center;
  flex: none;
  gap: 1px;
  min-width: 46px;
  height: 41px;
  padding: ${(p) => (p.$roomy ? '0 7px 0 6px' : '0 6px')};
  line-height: 14px;
  color: #a8a8a8;
`;

const ShelfScroll = styled.button`
  margin-left: 14px;
`;

const TabStrip = styled.div`
  display: flex;
  align-items: center;
  flex: none;
  height: 21px;
  background: #2c2c2c;
  ${condensed}
`;

const PaneTab = styled.div`
  display: flex;
  align-items: center;
  flex: none;
  gap: 22px;
  height: 20px;
  margin-left: ${(p) => (p.$bleed ? '-10px' : '0')};
  padding: 0 9px 0 7px;
  font-style: ${(p) => (p.$italic ? 'italic' : 'normal')};
  color: #aaa;
  background: ${(p) => (p.$active ? '#464646' : '#2b2b2b')};
  border-right: 2px solid #1e1e1e;
`;

const TabClose = styled.button`
  width: 5px;
  height: 5px;
`;

const AddTab = styled.button`
  margin-left: 8px;
`;

const PaneMenu = styled.div`
  display: flex;
  align-items: center;
  gap: 10px;
  margin-left: auto;
  padding-right: 7px;
`;

const PathBar = styled.div`
  display: flex;
  align-items: center;
  flex: none;
  height: 37px;
  padding: ${(p) => (p.$net ? '0 0 0 5px' : '0 6px 0 0')};
  background: linear-gradient(#484848, #3a3a3a);
  border-bottom: 2px solid #1e1e1e;
`;

const NavButton = styled.button`
  width: ${(p) => (p.$cut ? '20px' : '28px')};
  margin-left: ${(p) => (p.$cut ? '-4px' : '0')};
  margin-right: ${(p) => (p.$gap ? '6px' : '0')};
  svg {
    margin-left: auto;
    margin-right: auto;
  }
`;

const PathBox = styled.div`
  display: flex;
  align-items: center;
  flex: 1;
  gap: 7px;
  height: 28px;
  padding-left: 6px;
  background: #3b3b3b;
  border: 1px solid #1b1b1b;
`;

const Crumb = styled.span`
  display: flex;
  align-items: center;
  gap: 4px;
  color: #b9b9b9;
`;

const PathDrop = styled.button`
  display: flex;
  align-items: center;
  justify-content: center;
  width: 22px;
  height: 28px;
  background: #313131;
  border: 1px solid #1b1b1b;
  border-left: 0;
`;

const PathIcons = styled.div`
  display: flex;
  gap: 6px;
  padding-left: 12px;
  svg:nth-child(3) {
    margin-left: 12px;
  }
`;

const ViewBar = styled.div`
  display: flex;
  align-items: center;
  flex: none;
  height: 36px;
  padding: 0 7px 0 6px;
  background: #2f2f2f;
  border-top: 2px solid #474747;
`;

const ViewTitle = styled.h2`
  flex: 1;
  margin: 0;
  padding-left: 4px;
  font-size: 12px;
  line-height: 14px;
  color: #d2d2d2;
`;

const HelpButton = styled.button`
  width: 17px;
  height: 17px;
  margin-left: 8px;
  border: 2px solid #a8a8a8;
  border-radius: 50%;
  font-size: 11px;
  font-weight: bold;
  line-height: 13px;
  color: #d0d0d0;
`;

const ViewRow = styled.div`
  display: flex;
  flex: 518 1 0;
  min-height: 0;
  overflow: hidden;
`;

const ToolColumn = styled.div`
  display: flex;
  flex-direction: column;
  align-items: ${(p) => (p.$side === 'left' ? 'flex-start' : 'center')};
  flex: none;
  width: ${(p) => (p.$side === 'left' ? '27px' : '30px')};
  overflow: hidden;
  background: #393939;
  border-right: 2px solid #232323;
  > div:nth-child(2) {
    margin-top: ${(p) => (p.$side === 'left' ? '8px' : '21px')};
  }
  > div:nth-child(3) {
    margin-top: ${(p) => (p.$side === 'left' ? '31px' : '5px')};
  }
  > div:nth-child(4) {
    margin-top: 4px;
  }
  > svg {
    margin-left: ${(p) => (p.$side === 'left' ? '4px' : '0')};
    flex: none;
  }
`;

const ColumnCap = styled.div`
  display: flex;
  align-items: center;
  justify-content: flex-end;
  flex: none;
  align-self: stretch;
  height: 10px;
  background: #444;
  border-bottom: 1px solid #181818;
`;

const ToolGroup = styled.div`
  flex: none;
  background: ${(p) => (p.$framed ? '#454545' : 'transparent')};
`;

const ToolButton = styled.button`
  position: relative;
  display: flex;
  align-items: center;
  width: 22px;
  height: ${(p) => (p.$tight ? '27px' : '32px')};
  background: ${(p) => (p.$on ? '#b98018' : 'transparent')};
  svg {
    margin-left: -1px;
  }
  ${(p) => p.$menu && menuCorner}
  ${ToolColumn} > & {
    height: 28px;
    flex: none;
  }
`;

const DisplayButton = styled.button`
  position: relative;
  display: flex;
  align-items: center;
  justify-content: center;
  width: 25px;
  height: 26px;
  margin-bottom: 2px;
  background: ${(p) => (p.$on ? '#b98018' : 'transparent')};
  ${(p) => p.$menu && menuCorner}
`;

const ToolBadge = styled.span`
  position: absolute;
  top: 3px;
  right: 2px;
  font-size: 9px;
  font-weight: bold;
  line-height: 9px;
  color: #d0d0d0;
`;

const Accent = styled.hr`
  flex: none;
  width: 22px;
  height: 3px;
  margin: 13px 0 8px;
  border: 0;
  background: #b98018;
`;

const Viewport = styled.div`
  position: relative;
  flex: 1;
  min-width: 0;
  overflow: hidden;
  background: linear-gradient(#b3b3b3, #a5a5a5 50%, #9a9a9a);
`;

const SceneSvg = styled.svg`
  width: 100%;
  height: 100%;
`;

const CameraMenus = styled.div`
  position: absolute;
  top: 5px;
  right: 14px;
  display: flex;
  gap: 4px;
`;

const CameraMenu = styled.button`
  display: flex;
  align-items: center;
  height: 18px;
  padding: 0 2px;
  line-height: 14px;
  color: #e4e020;
  border: 2px solid #d8d42a;
`;

const Splitter = styled.div`
  display: flex;
  align-items: center;
  justify-content: ${(p) => (p.$end ? 'flex-end' : 'center')};
  flex: none;
  gap: 8px;
  height: ${(p) => (p.$end ? '8px' : '7px')};
  background: #484848;
  border-bottom: 1px solid #333;
`;

const Grip = styled.span`
  width: 23px;
  height: 5px;
  background: repeating-linear-gradient(90deg, #777 0 1px, #444 1px 3px);
`;

const RenderBar = styled.div`
  display: flex;
  align-items: center;
  flex: none;
  height: 41px;
  padding: 0 6px 0 27px;
  background: #2f2f2f;
  border-top: 2px solid #474747;
  border-bottom: 1px solid #181818;
`;

const RenderButton = styled.button`
  flex: none;
  width: 78px;
  height: 22px;
  margin-right: 5px;
  color: #c0c0c0;
  background: linear-gradient(#4c4c4c, #404040);
  box-shadow: 0 1px 2px #111;
`;

const IconButton = styled.button`
  display: flex;
  align-items: center;
  justify-content: center;
  flex: none;
  width: 28px;
  height: 28px;
`;

const SelectBox = styled.div`
  display: flex;
  align-items: center;
  flex: none;
  width: 140px;
  height: 23px;
  margin: 0 5px 0 7px;
  color: ${(p) => (p.$dim ? '#7a7a7a' : '#bdbdbd')};
  background: ${(p) => (p.$dim ? '#2a2a2a' : '#424242')};
  box-shadow: 0 1px 2px #161616;
  select {
    flex: 1;
    min-width: 0;
    height: 22px;
    padding-left: 10px;
    appearance: none;
  }
`;

const Steps = styled.span`
  display: flex;
  flex-direction: column;
  align-items: center;
  justify-content: center;
  gap: 1px;
  width: 25px;
  height: 23px;
  background: ${(p) => (p.$split ? '#363636' : 'transparent')};
`;

const Checks = styled.div`
  display: flex;
  margin-left: 7px;
`;

const CheckLabel = styled.label`
  display: flex;
  align-items: center;
  flex: none;
  gap: 8px;
  width: 83px;
  color: #b5b5b5;
`;

const Tick = styled.input`
  appearance: none;
  flex: none;
  width: 14px;
  height: 14px;
  background: #161616;
  &:checked::after {
    content: '';
    display: block;
    width: 14px;
    height: 14px;
    background: #e0e0e0;
    clip-path: polygon(10% 50%, 30% 45%, 42% 65%, 80% 5%, 100% 5%, 48% 95%, 36% 95%);
  }
`;

const Overflow = styled.button`
  width: 12px;
  height: 23px;
  margin: 0 4px 0 auto;
  background: #414141;
  box-shadow: 0 1px 2px #111;
`;

const RenderArea = styled.div`
  display: flex;
  flex: 233 1 0;
  min-height: 0;
  border: solid #464547;
  border-width: 10px 0;
`;

const RenderCanvas = styled.div`
  flex: 1;
  background: #000;
  border-top: 4px solid #153d17;
  border-bottom: 2px solid #2d5c30;
`;

const RenderScroll = styled.div`
  width: 12px;
  padding-top: 4px;
  background: #3a3a3a;
  border-left: 2px solid #1b1b1b;
`;

const SnapBar = styled.div`
  display: flex;
  align-items: center;
  flex: none;
  height: 32px;
  background: #2f2f2f;
  border-top: 2px solid #474747;
  ${SelectBox} {
    margin-right: 0;
  }
`;

const SnapSlider = styled.input`
  appearance: none;
  width: 208px;
  height: 2px;
  background: #242424;
  &::-webkit-slider-thumb {
    appearance: none;
    width: 5px;
    height: 20px;
    background: #292929;
  }
`;

const ShortSlider = styled(SnapSlider)`
  width: 80px;
`;

const SnapTools = styled.div`
  display: flex;
  align-items: center;
  gap: 6px;
  margin-left: 54px;
`;

const SnapPin = styled.button`
  background: #262626;
  box-shadow: 0 1px 2px #111;
`;

const MonoInput = styled.input`
  width: ${(p) => p.$w}px;
  height: 21px;
  padding-left: 4px;
  font-family: 'DejaVu Sans Mono', monospace;
  color: #484848;
  background: #2a2a2a;
`;

const NetBar = styled.div`
  display: flex;
  align-items: center;
  flex: none;
  height: 37px;
  padding-left: 3px;
  background: #2f2f2f;
  border-top: 2px solid #474747;
  border-bottom: 2px solid #161616;
  > svg {
    margin-right: 6px;
    align-self: flex-start;
    margin-top: 3px;
  }
  ${IconButton} {
    width: 27px;
  }
`;

const NetGap = styled.span`
  width: 10px;
`;

const Network = styled.div`
  position: relative;
  flex: 1;
  min-height: 0;
  overflow: hidden;
  background: #2e2e2e;
  border-left: 1px solid #222;
  font-size: 11px;
`;

const BackdropSvg = styled.svg`
  position: absolute;
  inset: 0;
  width: 100%;
  height: 100%;
`;

const WireSvg = styled(BackdropSvg)`
  z-index: 1;
  pointer-events: none;
`;

const NodeBox = styled.div`
  position: absolute;
  left: ${(p) => p.$x}px;
  top: ${(p) => p.$y - 6}px;
  display: grid;
  grid-template-columns: 73px auto;
  column-gap: 5px;
  row-gap: 1px;
`;

const Ports = styled.div`
  display: flex;
  grid-column: 1;
  justify-content: ${(p) => (p.$two ? 'space-around' : p.$many ? 'space-between' : 'center')};
  height: 5px;
`;

const Port = styled.span`
  width: 17px;
  height: 4px;
  background: #858585;
  outline: ${(p) => (p.$selected ? '2px solid #e6b41e' : 'none')};
`;

const NodeBody = styled.div`
  position: relative;
  z-index: 2;
  grid-column: 1;
  grid-row: 2;
  display: flex;
  gap: 1px;
  height: 19px;
  color: ${(p) => (p.$tone ? '#b5651c' : '#b8b6b8')};
  background: ${(p) => (p.$tone ? '#6e4418' : '#555')};
  outline: ${(p) => (p.$selected ? '3px solid #e6b41e' : 'none')};
`;

const Flag = styled.span`
  width: 8px;
  background: ${(p) => p.$fill || 'currentColor'};
  box-shadow: inset 0 0 0 1px ${(p) => p.$edge || 'transparent'};
`;

const NodeFace = styled.span`
  display: flex;
  align-items: center;
  justify-content: center;
  flex: 1;
  background: currentColor;
  ${(p) =>
    p.$hazard &&
    css`
      border: 4px solid transparent;
      background: linear-gradient(#aaa, #aaa) padding-box,
        repeating-linear-gradient(135deg, #e8d21c 0 3px, #111 3px 6px) border-box;
    `}
`;

const NodeLabel = styled.div`
  grid-column: 2;
  grid-row: 2;
  display: flex;
  flex-direction: column;
  justify-content: center;
  height: 20px;
  line-height: 13px;
  color: ${(p) => p.$color || '#b0b0b0'};
`;

const NodeNote = styled.span`
  color: #b0b0b0;
`;

const SubnetBox = styled.div`
  position: absolute;
  left: ${(p) => p.$x}px;
  top: ${(p) => p.$y}px;
  line-height: 15px;
  padding-left: 2px;
  color: #b0b0b0;
`;

const SubnetBody = styled.div`
  display: flex;
  align-items: center;
  justify-content: center;
  width: 73px;
  height: 19px;
  margin-left: -2px;
  background: #b3b3b3;
`;

const ParamPanel = styled.form`
  position: absolute;
  z-index: 3;
  top: 0;
  right: 0;
  width: 121px;
  height: 641px;
  overflow: hidden;
  padding-left: 9px;
  font-size: 12px;
  background: #3a3a3a;
  border-left: 1px solid #141414;
  border-bottom: 1px solid #141414;
`;

const ParamHead = styled.div`
  display: flex;
  align-items: center;
  gap: 5px;
  height: 31px;
  margin-bottom: 3px;
  font-weight: bold;
  color: #cfcfcf;
  border-bottom: 2px solid #202020;
`;

const ParamName = styled.input`
  flex: none;
  width: 120px;
  height: 21px;
  padding-left: 4px;
  font-family: 'DejaVu Sans Mono', monospace;
  font-weight: normal;
  background: #141414;
`;

const Param = styled.div`
  display: flex;
  align-items: center;
  justify-content: space-between;
  width: 135px;
  height: 28px;
  color: ${(p) => (p.$dim ? '#747474' : '#b5b5b5')};
`;

const ParamLabel = styled.span`
  flex: none;
`;

const Playbar = styled.footer`
  display: flex;
  align-items: flex-start;
  flex: none;
  height: 33px;
  overflow: hidden;
  background: #2d2d2d;
  border-top: 2px solid #474747;
`;

const Transport = styled.div`
  display: flex;
  gap: 1px;
  padding: 9px 0 0 11px;
`;

const PlayButton = styled.button`
  display: flex;
  justify-content: center;
  width: 29px;
  height: 26px;
  padding-top: 4px;
  background: ${(p) => (p.$on ? '#b98018' : '#454545')};
  box-shadow: inset 0 1px #565656;
`;

const FrameInputs = styled.div`
  display: flex;
  gap: 1px;
  margin: 0 13px 0 15px;
`;

const FrameInput = styled.input`
  flex: none;
  width: ${(p) => p.$w}px;
  height: 22px;
  margin-top: 13px;
  padding-left: 3px;
  font-family: 'DejaVu Sans Mono', monospace;
  color: #d0d0d0;
  background: #161616;
`;

const StepButton = styled.button`
  width: 18px;
  height: 22px;
  margin-top: 13px;
  color: #c5c5c5;
  background: #434343;
`;

const TimelineBox = styled.div`
  position: relative;
  flex: 1;
  min-width: 0;
  margin-left: 3px;
  overflow: hidden;
  border-top: 1px solid #8a8a8a;
`;

const FrameMarker = styled.span`
  position: absolute;
  top: 0;
  left: 0;
  width: 22px;
  height: 23px;
  font-size: 15px;
  line-height: 19px;
  text-align: center;
  color: #d8d8d8;
  background: #000;
  border: 2px solid #cfcfcf;
`;

export default App;
